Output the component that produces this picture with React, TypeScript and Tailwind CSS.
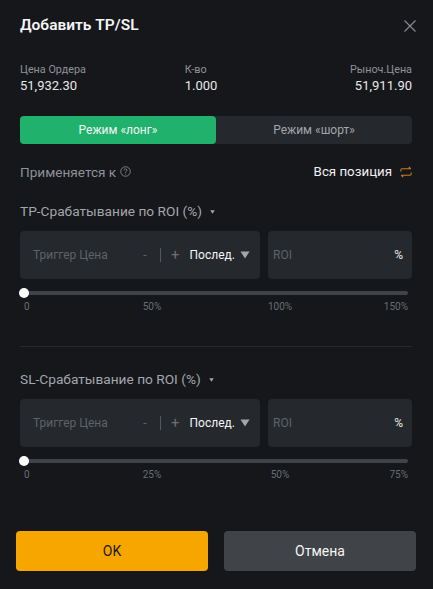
function Caret({ className }: { className: string }) {
  return (
    <svg viewBox="0 0 10 8" className={className} fill="currentColor">
      <path d="M0.5 0.5h9L5 7.5z" />
    </svg>
  );
}

function TriggerBlock({ label, marks }: { label: string; marks: string[] }) {
  return (
    <div>
      <div className="h-[20px] flex items-center text-[13.7px] leading-[20px] text-[#a3a6ab]">
        {label}
        <Caret className="w-[5px] h-[4px] ml-[8px] mt-[2px] text-[#a3a6ab]" />
      </div>
      <div className="mt-[10px] flex gap-[8px] h-[48px]">
        <div className="w-[240px] rounded-[4px] bg-[#25282d] flex items-center pl-[13px] text-[12px]">
          <span className="w-[103px] text-[#5f6368]">Триггер Цена</span>
          <span className="w-[18px] text-center text-[#5f6368]">-</span>
          <span className="w-px h-[14px] bg-[#55585d] ml-[6px]" />
          <span className="ml-[10px] text-[15px] leading-none text-[#6b6e73]">+</span>
          <span className="ml-[10px] text-[#f5f5f5] [font-weight:450]">Послед.</span>
          <Caret className="w-[10px] h-[8px] ml-[5px] text-[#a3a6ab]" />
        </div>
        <div className="flex-1 rounded-[4px] bg-[#25282d] flex items-center justify-between pl-[5px] pr-[9px] text-[12px]">
          <span className="text-[#5f6368]">ROI</span>
          <span className="text-[#e6e6e6]">%</span>
        </div>
      </div>
      <div className="mt-[12px] mx-[4px] relative h-[4px] rounded-full bg-[#404347]">
        <div className="absolute left-[-5px] top-[-3px] w-[10px] h-[10px] rounded-full bg-white" />
      </div>
      <div className="mt-[5px] mx-[4px] flex justify-between text-[10px] leading-[14px] text-[#6a6d72]">
        {marks.map((m, i) => (
          <div
            key={m}
            className={`w-0 flex ${i === 0 ? 'justify-start' : i === marks.length - 1 ? 'justify-end' : 'justify-center'}`}
          >
            <span>{m}</span>
          </div>
        ))}
      </div>
    </div>
  );
}

export default function App() {
  return (
    <div className="w-[433px] h-[589px] bg-[#15171b] overflow-hidden font-['Roboto',sans-serif]">
      <div className="w-[432px] px-[20px]">
        <div className="h-[42px] pt-[10px] flex items-center justify-between">
          <span className="text-[15.5px] font-semibold text-[#f5f5f5]">Добавить TP/SL</span>
          <svg viewBox="0 0 12 12" className="w-[12px] h-[12px] -mr-[4px] text-[#8a8d92]" fill="none" stroke="currentColor" strokeWidth="1.1">
            <path d="M0.5 0.5l11 11M11.5 0.5l-11 11" />
          </svg>
        </div>

        <div className="mt-[20px] grid grid-cols-3 text-[10.8px] leading-[15px] text-[#8f9297]">
          <div>
            <div>Цена Ордера</div>
            <div className="text-[13px] leading-[18px] text-[#e8e8e8]">51,932.30</div>
          </div>
          <div className="pl-[34px]">
            <div>К-во</div>
            <div className="text-[13px] leading-[18px] text-[#e8e8e8]">1.000</div>
          </div>
          <div className="text-right">
            <div>Рыноч.Цена</div>
            <div className="text-[13px] leading-[18px] text-[#e8e8e8]">51,911.90</div>
          </div>
        </div>

        <div className="mt-[21px] h-[28px] flex rounded-[4px] bg-[#25282d] text-[12px]">
          <div className="w-[196px] rounded-[4px] bg-[#20b26c] flex items-center justify-center text-[#f5f5f5]">
            Режим «лонг»
          </div>
          <div className="flex-1 flex items-center justify-center text-[#a3a6ab]">Режим «шорт»</div>
        </div>

        <div className="mt-[18px] h-[20px] flex items-center justify-between text-[13.6px]">
          <div className="flex items-center text-[#8f9297]">
            Применяется к
            <svg viewBox="0 0 12 12" className="w-[11px] h-[11px] ml-[4px] mb-[2px]" fill="none" stroke="currentColor">
              <circle cx="6" cy="6" r="5.2" strokeWidth="0.9" />
              <path d="M4.4 4.8a1.6 1.6 0 1 1 2.4 1.3c-.5.3-.8.6-.8 1.1" strokeWidth="0.9" />
              <path d="M6 8.4v.9" strokeWidth="0.9" />
            </svg>
          </div>
          <div className="flex items-center text-[13.3px] text-[#f0f0f0]">
            Вся позиция
            <svg viewBox="0 0 12 12" className="w-[12px] h-[12px] ml-[8px]" fill="none" stroke="#c9801c" strokeWidth="1.1" strokeLinejoin="round">
              <path d="M0.8 5.4V4.2a1.4 1.4 0 0 1 1.4-1.4h8.6M8.8 0.8l2 2" />
              <path d="M11.2 6.6v1.2a1.4 1.4 0 0 1-1.4 1.4H1.2M3.2 11.2l-2-2" />
            </svg>
          </div>
        </div>

        <div className="mt-[19px]">
          <TriggerBlock label="TP-Срабатывание по ROI (%)" marks={['0', '50%', '100%', '150%']} />
        </div>

        <div className="mt-[32px] h-px bg-[#25282d]" />

        <div className="mt-[22px]">
          <TriggerBlock label="SL-Срабатывание по ROI (%)" marks={['0', '25%', '50%', '75%']} />
        </div>
      </div>

      <div className="w-[432px] mt-[49px] px-[16px] flex gap-[16px] text-[14px] [font-weight:450]">
        <button className="flex-1 h-[40px] rounded-[4px] bg-[#f7a600] text-[#1a1a1a]">OK</button>
        <button className="flex-1 h-[40px] rounded-[4px] bg-[#404347] text-[#f5f5f5]">Отмена</button>
      </div>
    </div>
  );
}
